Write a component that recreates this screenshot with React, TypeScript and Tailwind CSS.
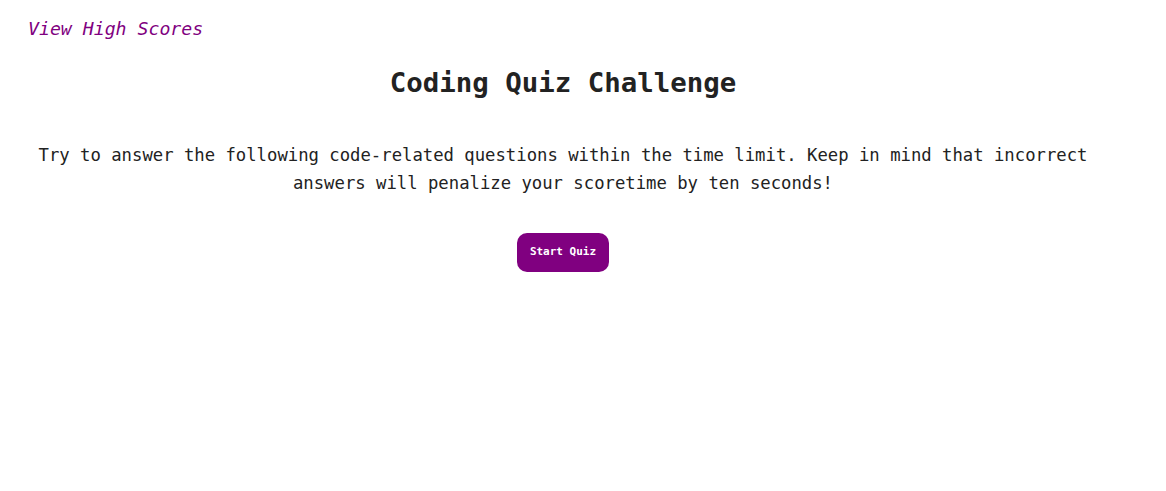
export default function App() {
  return (
    <div className="min-h-[491px] bg-white font-['DejaVu_Sans_Mono','Liberation_Mono',monospace] text-[#222]">
      <header className="px-[28px] pt-[17px]">
        <a href="#" className="text-[18.2px] italic leading-[24px] text-[#800080]">
          View High Scores
        </a>
      </header>

      <main className="flex flex-col items-center pl-0 pr-[40px]">
        <h1 className="mt-[23px] text-[27.4px] font-bold leading-[36px]">Coding Quiz Challenge</h1>
        <p className="mt-[40px] text-center text-[17.25px] leading-[28px]">
          Try to answer the following code-related questions within the time limit. Keep in mind that incorrect
          answers will penalize your scoretime by ten seconds!
        </p>
        <button className="mt-[36px] h-[39px] w-[92px] rounded-[10px] bg-[#800080] text-[11px] font-bold text-white">
          Start Quiz
        </button>
      </main>
    </div>
  )
}
